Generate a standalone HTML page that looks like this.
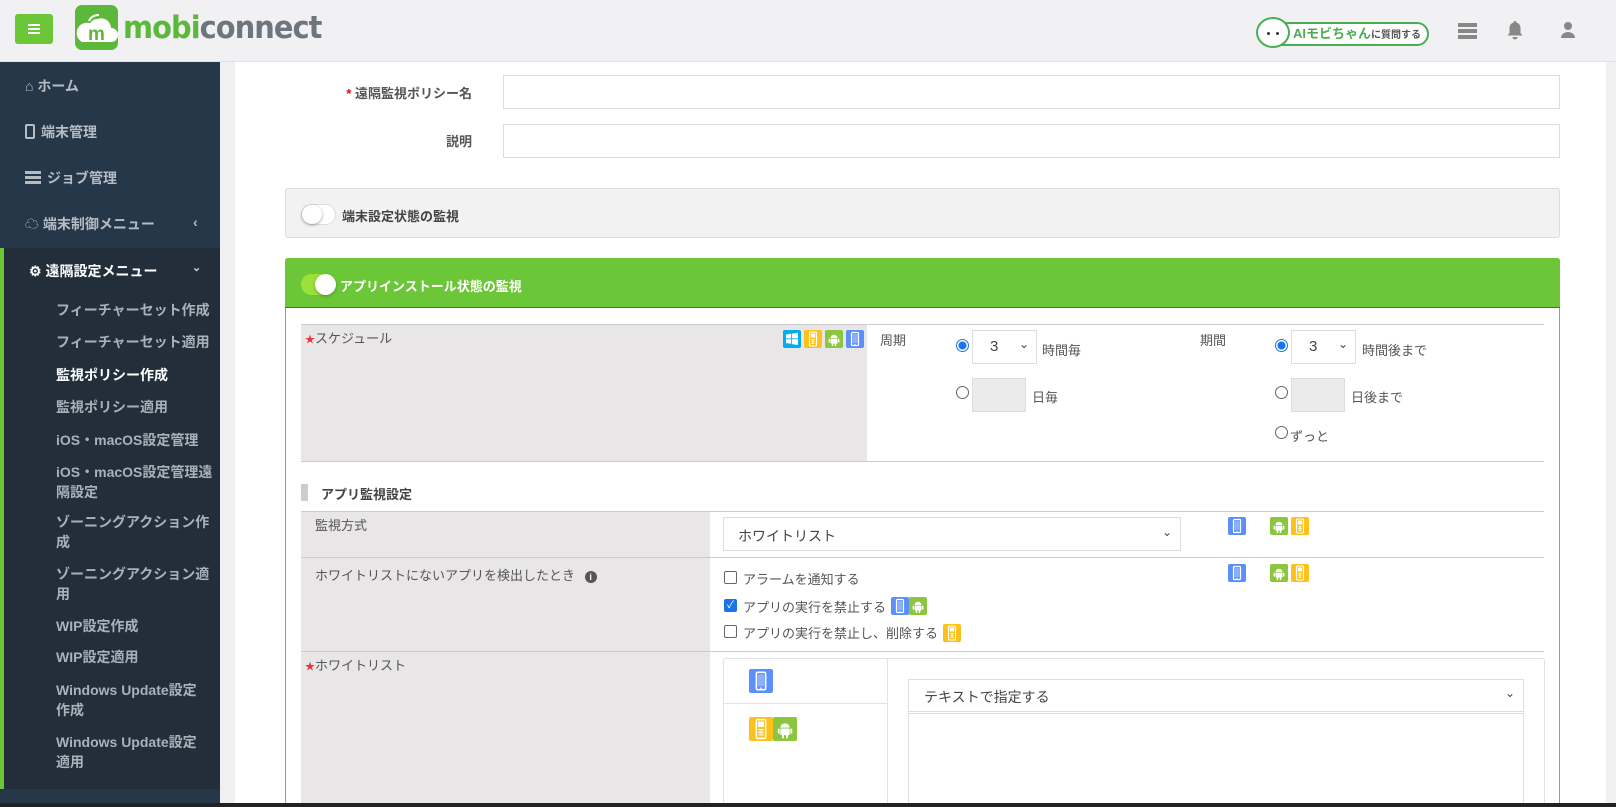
<!DOCTYPE html>
<html><head><meta charset="utf-8"><style>
*{box-sizing:border-box;margin:0;padding:0}
html,body{width:1616px;height:807px;overflow:hidden}
body{background:#f0f0f2;font-family:"Liberation Sans","Noto Sans CJK JP",sans-serif;color:#555;font-size:13px;position:relative}
.a{position:absolute}
.hdr{left:0;top:0;width:1616px;height:62px;background:#f1f1f3;border-bottom:1px solid #e2e2e4}
.side{left:0;top:62px;width:220px;height:745px;background:#27374a}
.nav{color:#b5bcc4;font-weight:bold;font-size:14px;white-space:nowrap}
.sub{left:56px;color:#a9b1ba;font-weight:bold;font-size:14px;line-height:20px;width:152px}
.nw{white-space:nowrap}
.main{left:235px;top:62px;width:1371px;height:745px;background:#fff}
.inp{border:1px solid #ddd;background:#fff}
.ic{position:absolute;width:18px;height:18px;border-radius:2px}
.b{background:#5b8ff9}.g{background:#8cc63f}.y{background:#fcc11a}.w{background:#00adef}
.ic svg{position:absolute;left:0;top:0}
.lab{font-size:13px;color:#555}
.rad{position:absolute;width:13px;height:13px;border-radius:50%;border:1px solid #666;background:#fff}
.rad.on{border:1px solid #1a73e8;background:radial-gradient(circle,#1a73e8 3.5px,#fff 4.5px)}
.chk{position:absolute;width:13px;height:13px;border:1px solid #666;border-radius:2px;background:#fff}
.sel{position:absolute;border:1px solid #ddd;background:#fff;font-size:15px;color:#444}
</style></head><body>
<svg width="0" height="0" style="position:absolute"><defs>
<symbol id="ph" viewBox="0 0 18 18"><rect x="5.5" y="2.5" width="7" height="13" rx="1" fill="none" stroke="#fff" stroke-width="1.2"/><rect x="6.5" y="4" width="5" height="9" fill="#fff" opacity=".3"/><circle cx="9" cy="14.3" r=".6" fill="#fff"/></symbol>
<symbol id="an" viewBox="0 0 18 18"><path d="M5.5 8a3.5 3.2 0 0 1 7 0z" fill="#fff"/><rect x="5.5" y="8.6" width="7" height="5" rx=".8" fill="#fff"/><rect x="3.6" y="8.6" width="1.4" height="4" rx=".7" fill="#fff"/><rect x="13" y="8.6" width="1.4" height="4" rx=".7" fill="#fff"/><rect x="6.8" y="13" width="1.4" height="3" fill="#fff"/><rect x="9.8" y="13" width="1.4" height="3" fill="#fff"/></symbol>
<symbol id="fp" viewBox="0 0 18 18"><rect x="5.5" y="2" width="7" height="14" rx="1" fill="none" stroke="#fff" stroke-width="1.1"/><rect x="6.8" y="3.5" width="4.4" height="4" fill="#fff"/><path d="M6.8 9.5h4.4M6.8 11.5h4.4M6.8 13.5h4.4M8.3 9v5M9.7 9v5" stroke="#fff" stroke-width=".6"/></symbol>
<symbol id="wi" viewBox="0 0 18 18"><path d="M3 4.5l5-.7v4.6H3zM8.8 3.7L15 2.8v5.6H8.8zM3 9.2h5v4.6l-5-.7zM8.8 9.2H15V15l-6.2-.9z" fill="#fff"/></symbol>
</defs></svg>

<div class="a hdr"></div>
<div class="a" style="left:15px;top:14px;width:38px;height:30px;background:#6cc738;border-radius:3px"><div class="a" style="left:13px;top:10px;width:12px;height:2px;background:#fff;box-shadow:0 4px 0 #fff,0 8px 0 #fff"></div></div>
<div class="a" style="left:75px;top:5px;width:43px;height:45px;background:#5cb83a;border-radius:7px">
<svg width="43" height="45" viewBox="0 0 43 45"><path d="M7 37h29a7 7 0 0 0 0-14 10 10 0 0 0-19-4 7 7 0 0 0-10 18z" fill="#fff"/><path d="M14 16a10 10 0 0 1 10-6M16 19a7 7 0 0 1 7-4" stroke="#fff" stroke-width="2" fill="none"/><text x="21.5" y="35" font-family="Liberation Sans" font-weight="bold" font-size="19" fill="#5cb83a" text-anchor="middle">m</text></svg></div>
<div class="a" style="left:123px;top:6px;font-size:31px;font-family:'DejaVu Sans',sans-serif;font-weight:bold;letter-spacing:-1px;line-height:44px;transform:scaleX(.93);transform-origin:left"><span style="color:#5cb83a">mobi</span><span style="color:#6d757d">connect</span></div>
<div class="a" style="left:1258px;top:22px;width:171px;height:24px;border:2px solid #4aad52;border-radius:12px;background:#fff"></div>
<div class="a" style="left:1256px;top:17px;width:34px;height:31px;border-radius:50%;background:#fff;border:2px solid #4aad52"><div class="a" style="left:9px;top:13px;width:3px;height:3px;background:#333;border-radius:50%;box-shadow:9px 0 0 #333"></div></div>
<div class="a" style="left:1293px;top:25px;font-size:13px;font-weight:bold;color:#4aad52;white-space:nowrap;line-height:18px">AIモビちゃん<span style="color:#555;font-size:10px">に質問する</span></div>
<div class="a" style="left:1458px;top:23px;width:19px;height:4px;background:#888;box-shadow:0 6px 0 #888,0 12px 0 #888"></div>
<svg class="a" style="left:1506px;top:20px" width="18" height="20" viewBox="0 0 18 20"><path d="M9 1a1.5 1.5 0 0 1 1.5 1.5A5.5 5.5 0 0 1 14.5 8v5l2 2.5H1.5l2-2.5V8a5.5 5.5 0 0 1 4-5.5A1.5 1.5 0 0 1 9 1zM6.5 17h5a2.5 2.5 0 0 1-5 0z" fill="#888"/></svg>
<svg class="a" style="left:1560px;top:21px" width="16" height="18" viewBox="0 0 16 18"><circle cx="8" cy="5" r="4" fill="#888"/><path d="M1 17a7 6 0 0 1 14 0z" fill="#888"/></svg>

<div class="a side"></div>
<div class="a" style="left:0;top:248px;width:220px;height:541px;background:#222f3b"></div>
<div class="a" style="left:0;top:248px;width:4px;height:541px;background:#6cc738"></div>
<div class="a nav" style="left:25px;top:76px">⌂ ホーム</div>
<div class="a nav" style="left:25px;top:122px"><span style="display:inline-block;width:10px;height:15px;border:2px solid #b5bcc4;border-radius:2px;vertical-align:-2px;margin-right:6px"></span>端末管理</div>
<div class="a nav" style="left:25px;top:168px"><span style="display:inline-block;width:16px;height:3px;background:#b5bcc4;box-shadow:0 5px 0 #b5bcc4,0 10px 0 #b5bcc4;vertical-align:9px;margin-right:6px"></span>ジョブ管理</div>
<div class="a nav" style="left:25px;top:214px"><span style="font-size:14px">☁</span> 端末制御メニュー</div>
<div class="a nav" style="left:193px;top:214px">‹</div>
<div class="a nav" style="left:29px;top:261px;color:#fff">⚙ 遠隔設定メニュー</div>
<div class="a nav" style="left:192px;top:261px;color:#ccc;font-size:11px">⌄</div>
<div class="a sub nw" style="top:300px">フィーチャーセット作成</div>
<div class="a sub nw" style="top:332px">フィーチャーセット適用</div>
<div class="a sub" style="top:365px;color:#fff">監視ポリシー作成</div>
<div class="a sub" style="top:397px">監視ポリシー適用</div>
<div class="a sub nw" style="top:430px">iOS・macOS設定管理</div>
<div class="a sub" style="top:462px;width:160px">iOS・macOS設定管理遠隔設定</div>
<div class="a sub" style="top:512px;width:160px">ゾーニングアクション作成</div>
<div class="a sub" style="top:564px;width:160px">ゾーニングアクション適用</div>
<div class="a sub" style="top:616px">WIP設定作成</div>
<div class="a sub" style="top:647px">WIP設定適用</div>
<div class="a sub" style="top:680px">Windows Update設定作成</div>
<div class="a sub" style="top:732px">Windows Update設定適用</div>

<div class="a main"></div>
<div class="a" style="left:300px;top:83px;width:172px;text-align:right;font-weight:bold;font-size:13px;color:#555"><span style="color:#e00">* </span>遠隔監視ポリシー名</div>
<div class="a inp" style="left:503px;top:75px;width:1057px;height:34px"></div>
<div class="a" style="left:300px;top:131px;width:172px;text-align:right;font-weight:bold;font-size:13px;color:#555">説明</div>
<div class="a inp" style="left:503px;top:124px;width:1057px;height:34px"></div>

<div class="a" style="left:285px;top:188px;width:1275px;height:50px;background:#f3f2f3;border:1px solid #ddd;border-radius:3px"></div>
<div class="a" style="left:301px;top:204px;width:35px;height:21px;border-radius:11px;background:#fff;border:1px solid #ddd"><div class="a" style="left:0;top:0;width:20px;height:19px;border-radius:50%;background:#fff;box-shadow:0 1px 3px rgba(0,0,0,.35)"></div></div>
<div class="a" style="left:342px;top:206px;font-weight:bold;font-size:13px;color:#444">端末設定状態の監視</div>

<div class="a" style="left:285px;top:258px;width:1275px;height:549px;border:1px solid #6cc738;border-bottom:none;border-radius:3px 3px 0 0;background:#fff"></div>
<div class="a" style="left:285px;top:258px;width:1275px;height:50px;background:#6cc738;border-bottom:1px solid #2a6db0;border-radius:3px 3px 0 0"></div>
<div class="a" style="left:301px;top:274px;width:35px;height:21px;border-radius:11px;background:#9be13a"><div class="a" style="left:14px;top:0;width:21px;height:21px;border-radius:50%;background:#fff;box-shadow:0 1px 3px rgba(0,0,0,.3)"></div></div>
<div class="a" style="left:340px;top:276px;font-weight:bold;font-size:13px;color:#fff">アプリインストール状態の監視</div>

<div class="a" style="left:301px;top:324px;width:1243px;height:138px;border-top:1px solid #ccc;border-bottom:1px solid #ccc"></div>
<div class="a" style="left:301px;top:325px;width:566px;height:136px;background:#e8e6e7"></div>
<div class="a lab" style="left:305px;top:328px"><span style="color:#e33;font-size:10px">★</span>スケジュール</div>
<div class="ic w" style="left:783px;top:330px"><svg width="18" height="18"><use href="#wi"/></svg></div>
<div class="ic y" style="left:804px;top:330px"><svg width="18" height="18"><use href="#fp"/></svg></div>
<div class="ic g" style="left:825px;top:330px"><svg width="18" height="18"><use href="#an"/></svg></div>
<div class="ic b" style="left:846px;top:330px"><svg width="18" height="18"><use href="#ph"/></svg></div>
<div class="a lab" style="left:880px;top:330px">周期</div>
<div class="rad on" style="left:956px;top:339px"></div>
<div class="sel" style="left:972px;top:330px;width:65px;height:34px;padding:7px 0 0 17px">3<span style="position:absolute;right:7px;top:6px;font-size:12px">⌄</span></div>
<div class="a lab" style="left:1042px;top:340px">時間毎</div>
<div class="rad" style="left:956px;top:386px"></div>
<div class="a" style="left:972px;top:378px;width:54px;height:34px;background:#ebebeb;border:1px solid #ddd"></div>
<div class="a lab" style="left:1032px;top:387px">日毎</div>
<div class="a lab" style="left:1200px;top:330px">期間</div>
<div class="rad on" style="left:1275px;top:339px"></div>
<div class="sel" style="left:1291px;top:330px;width:65px;height:34px;padding:7px 0 0 17px">3<span style="position:absolute;right:7px;top:6px;font-size:12px">⌄</span></div>
<div class="a lab" style="left:1362px;top:340px">時間後まで</div>
<div class="rad" style="left:1275px;top:386px"></div>
<div class="a" style="left:1291px;top:378px;width:54px;height:34px;background:#ebebeb;border:1px solid #ddd"></div>
<div class="a lab" style="left:1351px;top:387px">日後まで</div>
<div class="rad" style="left:1275px;top:426px"></div>
<div class="a lab" style="left:1290px;top:426px">ずっと</div>

<div class="a" style="left:301px;top:484px;width:7px;height:17px;background:#ccc"></div>
<div class="a" style="left:321px;top:484px;font-weight:bold;font-size:13px;color:#444">アプリ監視設定</div>

<div class="a" style="left:301px;top:511px;width:409px;height:296px;background:#e8e6e7"></div>
<div class="a" style="left:301px;top:511px;width:1243px;height:1px;background:#ccc"></div>
<div class="a" style="left:301px;top:557px;width:1243px;height:1px;background:#ccc"></div>
<div class="a" style="left:301px;top:651px;width:1243px;height:1px;background:#ccc"></div>
<div class="a lab" style="left:315px;top:515px">監視方式</div>
<div class="sel" style="left:723px;top:517px;width:458px;height:34px;padding:8px 0 0 14px;font-size:14px">ホワイトリスト<span style="position:absolute;right:8px;top:7px;font-size:12px">⌄</span></div>
<div class="ic b" style="left:1228px;top:517px"><svg width="18" height="18"><use href="#ph"/></svg></div>
<div class="ic g" style="left:1270px;top:517px"><svg width="18" height="18"><use href="#an"/></svg></div>
<div class="ic y" style="left:1291px;top:517px"><svg width="18" height="18"><use href="#fp"/></svg></div>
<div class="a lab" style="left:315px;top:565px">ホワイトリストにないアプリを検出したとき <span style="display:inline-block;width:12px;height:12px;border-radius:50%;background:#555;color:#fff;font-size:9px;text-align:center;line-height:12px;font-weight:bold;margin-left:6px">i</span></div>
<div class="ic b" style="left:1228px;top:564px"><svg width="18" height="18"><use href="#ph"/></svg></div>
<div class="ic g" style="left:1270px;top:564px"><svg width="18" height="18"><use href="#an"/></svg></div>
<div class="ic y" style="left:1291px;top:564px"><svg width="18" height="18"><use href="#fp"/></svg></div>
<div class="chk" style="left:724px;top:571px"></div>
<div class="a lab" style="left:743px;top:569px">アラームを通知する</div>
<div class="chk" style="left:724px;top:599px;background:#1a73e8;border-color:#1a73e8;color:#fff;font-size:10px;line-height:11px;text-align:center">✓</div>
<div class="a lab" style="left:743px;top:597px">アプリの実行を禁止する</div>
<div class="ic b" style="left:891px;top:597px"><svg width="18" height="18"><use href="#ph"/></svg></div>
<div class="ic g" style="left:909px;top:597px"><svg width="18" height="18"><use href="#an"/></svg></div>
<div class="chk" style="left:724px;top:625px"></div>
<div class="a lab" style="left:743px;top:623px">アプリの実行を禁止し、削除する</div>
<div class="ic y" style="left:943px;top:624px"><svg width="18" height="18"><use href="#fp"/></svg></div>

<div class="a lab" style="left:305px;top:655px"><span style="color:#e33;font-size:10px">★</span>ホワイトリスト</div>
<div class="a" style="left:723px;top:658px;width:822px;height:149px;border:1px solid #e2e2e2;border-bottom:none;border-radius:3px 3px 0 0"></div>
<div class="a" style="left:723px;top:658px;width:165px;height:46px;border:1px solid #e2e2e2;border-bottom:none;border-radius:3px 0 0 0;background:#fff"></div>
<div class="a" style="left:723px;top:703px;width:165px;height:1px;background:#e2e2e2"></div>
<div class="a" style="left:887px;top:703px;width:1px;height:104px;background:#e2e2e2"></div>
<div class="ic b" style="left:749px;top:669px;width:24px;height:24px"><svg width="24" height="24" viewBox="0 0 18 18"><use href="#ph"/></svg></div>
<div class="ic y" style="left:749px;top:717px;width:24px;height:24px"><svg width="24" height="24" viewBox="0 0 18 18"><use href="#fp"/></svg></div>
<div class="ic g" style="left:773px;top:717px;width:24px;height:24px"><svg width="24" height="24" viewBox="0 0 18 18"><use href="#an"/></svg></div>
<div class="sel" style="left:908px;top:679px;width:616px;height:33px;padding:7px 0 0 15px;font-size:14px">テキストで指定する<span style="position:absolute;right:8px;top:6px;font-size:12px">⌄</span></div>
<div class="a" style="left:908px;top:713px;width:616px;height:94px;border:1px solid #ddd;border-bottom:none"></div>
<div class="a" style="left:0;top:803px;width:1616px;height:4px;background:#222"></div>
</body></html>
